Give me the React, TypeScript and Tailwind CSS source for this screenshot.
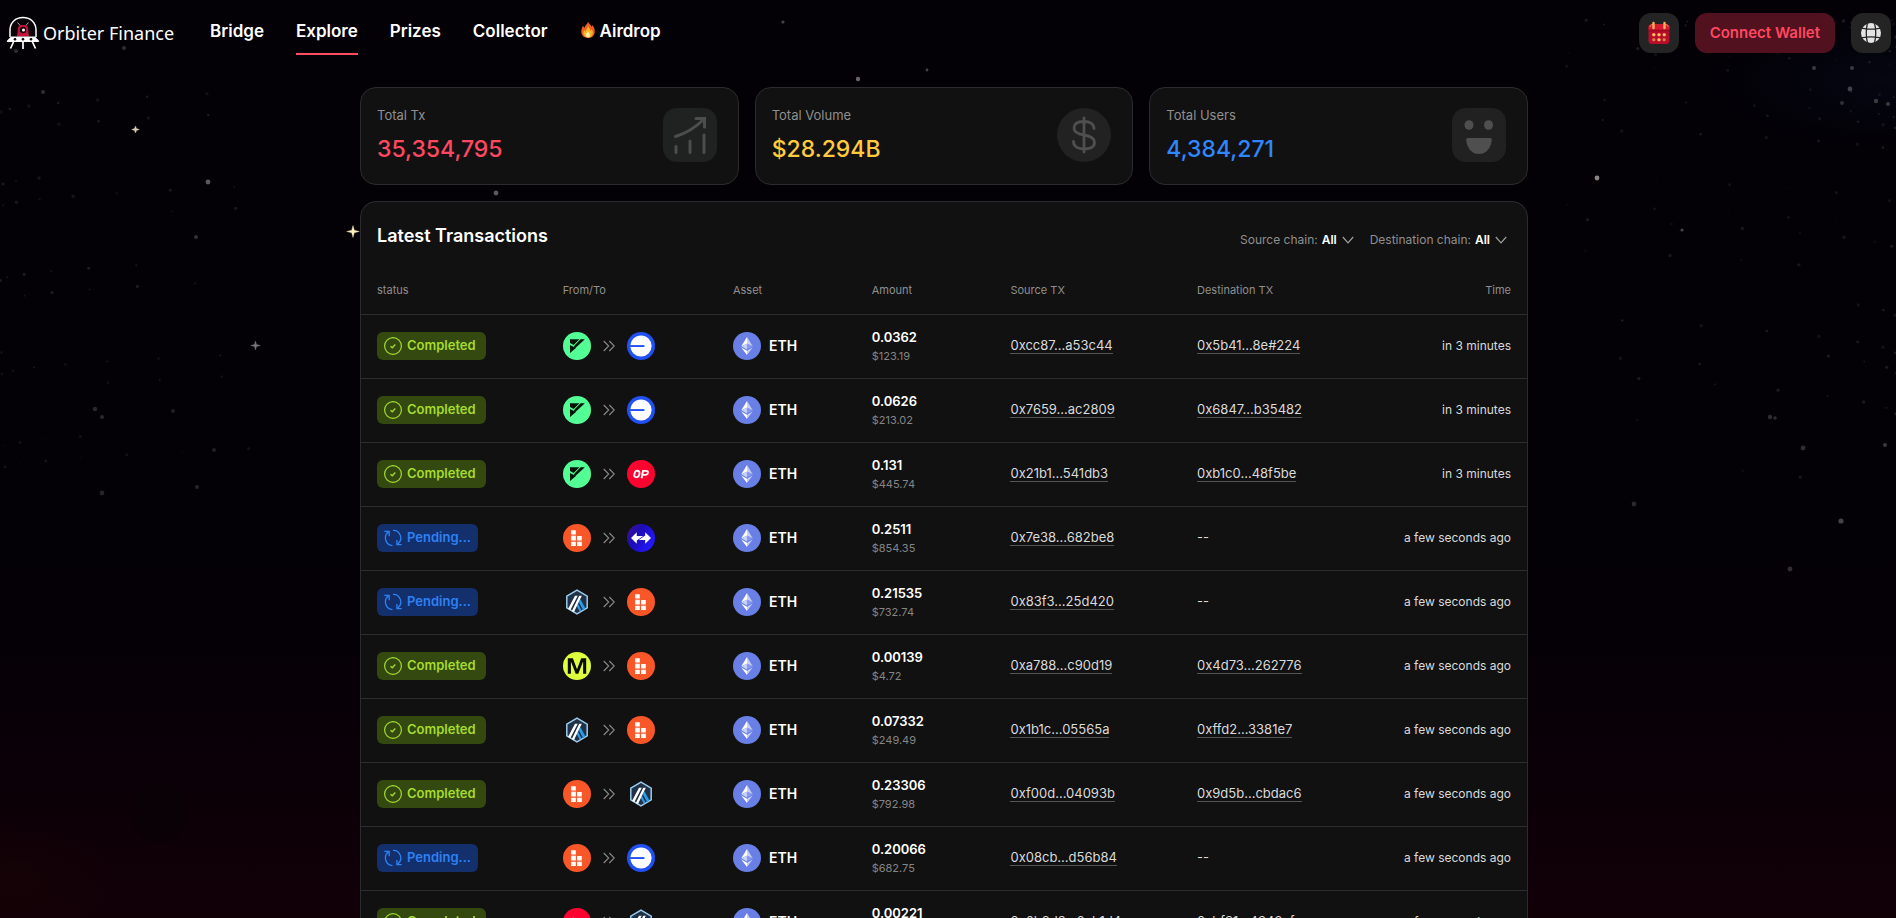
import type { ReactNode } from "react";

type Chain = "zk" | "base" | "op" | "block" | "sync" | "arb" | "mode";

interface Tx {
  done: boolean;
  from: Chain;
  to: Chain;
  amount: string;
  usd: string;
  source: string;
  dest: string;
  time: string;
}

const rows: Tx[] = [
  { done: true, from: "zk", to: "base", amount: "0.0362", usd: "$123.19", source: "0xcc87...a53c44", dest: "0x5b41...8e#224", time: "in 3 minutes" },
  { done: true, from: "zk", to: "base", amount: "0.0626", usd: "$213.02", source: "0x7659...ac2809", dest: "0x6847...b35482", time: "in 3 minutes" },
  { done: true, from: "zk", to: "op", amount: "0.131", usd: "$445.74", source: "0x21b1...541db3", dest: "0xb1c0...48f5be", time: "in 3 minutes" },
  { done: false, from: "block", to: "sync", amount: "0.2511", usd: "$854.35", source: "0x7e38...682be8", dest: "", time: "a few seconds ago" },
  { done: false, from: "arb", to: "block", amount: "0.21535", usd: "$732.74", source: "0x83f3...25d420", dest: "", time: "a few seconds ago" },
  { done: true, from: "mode", to: "block", amount: "0.00139", usd: "$4.72", source: "0xa788...c90d19", dest: "0x4d73...262776", time: "a few seconds ago" },
  { done: true, from: "arb", to: "block", amount: "0.07332", usd: "$249.49", source: "0x1b1c...05565a", dest: "0xffd2...3381e7", time: "a few seconds ago" },
  { done: true, from: "block", to: "arb", amount: "0.23306", usd: "$792.98", source: "0xf00d...04093b", dest: "0x9d5b...cbdac6", time: "a few seconds ago" },
  { done: false, from: "block", to: "base", amount: "0.20066", usd: "$682.75", source: "0x08cb...d56b84", dest: "", time: "a few seconds ago" },
  { done: true, from: "op", to: "arb", amount: "0.00221", usd: "$7.51", source: "0x6b8d3...6eb1d4", dest: "0xbf31...4342cf", time: "a few seconds ago" },
];

const glyphs: Record<Chain, ReactNode> = {
  zk: (
    <>
      <circle cx="14" cy="14" r="14" fill="#54ff95" />
      <path d="M7 7.200h9.400L10.600 13 7 11z M17.600 7.200h4.300L12.400 16l-1.600-1.700z M7 12.900l6 3.100-6 5z" fill="#07120b" />
    </>
  ),
  base: (
    <>
      <circle cx="14" cy="14" r="14" fill="#2151f5" />
      <circle cx="14" cy="14" r="10.600" fill="#fff" />
      <path d="M3 13.100h14.400v1.900H3z" fill="#2151f5" />
    </>
  ),
  op: (
    <>
      <circle cx="14" cy="14" r="14" fill="#ff0330" />
      <g fill="none" stroke="#fff" strokeWidth="1.900">
        <path d="M9.100 10.900c2.200-.5 3.600.3 3.400 2.300-.2 2.600-1.300 4-3.200 4-1.600 0-2.300-1-2-2.700.3-2 .8-3.200 1.800-3.600z" />
        <path d="M14.600 18.200l1.400-7.300h2.900c1.600 0 2.300.7 2 2-.3 1.400-1.200 2-2.700 2h-2.600" />
      </g>
    </>
  ),
  block: (
    <>
      <circle cx="14" cy="14" r="14" fill="#fa5728" />
      <path d="M8.200 6.200h4.600v4.400H8.200zM8.200 12h4.600v4.400H8.200zM14 12h4.800v4.400H14zM8.200 17.700h4.600v4.400H8.200zM14 17.700h4.800v4.400H14z" fill="#fff" />
      <path d="M8.200 10.800h4.600v.9H8.200z" fill="#fff" opacity=".4" />
    </>
  ),
  sync: (
    <>
      <defs>
        <linearGradient id="sync-fill" x1="0" y1="0" x2="1" y2="0.6">
          <stop offset="0" stopColor="#43108f" />
          <stop offset="0.45" stopColor="#1c0cb4" />
          <stop offset="1" stopColor="#2218ff" />
        </linearGradient>
      </defs>
      <circle cx="14" cy="14" r="14" fill="url(#sync-fill)" />
      <path d="M4 14l5.800-5.800v3.900h6.400L9.800 16.600v3.200zM24 14l-5.800 5.800v-3.900h-6.400l6.400-4.500V8.200z" fill="#fff" />
    </>
  ),
  arb: (
    <>
      <path d="M14 2.200l10.200 5.900v11.800L14 25.800 3.800 19.900V8.100z" fill="#213147" stroke="#9dcced" strokeWidth="1.500" />
      <path d="M17.400 11.200l5 9.200-2.300 1.500-4.200-7.600z" fill="#28a0f0" />
      <path d="M15.100 16l3.300 6.400-1.700 1-3-5.600z" fill="#28a0f0" />
      <path d="M12 7.800h2.700L7.300 22.300l-2.200-1.500zM16.200 7.800h2.600L10.900 24.200l-2-1.300z" fill="#fff" />
    </>
  ),
  mode: (
    <>
      <circle cx="14" cy="14" r="14" fill="#dffe3e" />
      <path d="M4.800 21.800V6.200h5.100L14 17.200l4.200-11h5v15.600h-3.100V9.400l-4.800 12.400h-2.600L7.900 9.400v12.400z" fill="#0b0b06" />
    </>
  ),
};

function ChainIcon({ chain }: { chain: Chain }) {
  return (
    <svg viewBox="0 0 28 28" className="size-7 shrink-0" aria-hidden="true">
      {glyphs[chain]}
    </svg>
  );
}

function EthIcon() {
  return (
    <svg viewBox="0 0 28 28" className="size-7 shrink-0" aria-hidden="true">
      <circle cx="14" cy="14" r="14" fill="#6a7fe6" />
      <path d="M14 5v6.700l-5.700 2.600z" fill="#fff" />
      <path d="M14 5l5.700 9.300-5.700-2.600z" fill="#c6cff7" />
      <path d="M14 11.700v5.900l-5.700-3.300z" fill="#c6cff7" />
      <path d="M14 11.700l5.700 2.600-5.700 3.300z" fill="#8998eb" />
      <path d="M8.300 15.500L14 18.800V23z" fill="#fff" />
      <path d="M19.700 15.500L14 18.800V23z" fill="#c6cff7" />
    </svg>
  );
}

function Status({ done }: { done: boolean }) {
  return done ? (
    <span className="inline-flex h-7 items-center gap-[5px] rounded-md bg-[#33490f] pr-[10px] pl-[7px] text-[13px] font-semibold text-[#a4dc2c]">
      <svg viewBox="0 0 18 18" className="size-[18px]" fill="none" stroke="currentColor" aria-hidden="true">
        <circle cx="9" cy="9" r="8.400" strokeWidth="1.200" />
        <path d="M6.500 9.300l1.800 1.500 3-3.200" strokeWidth="1.400" />
      </svg>
      Completed
    </span>
  ) : (
    <span className="inline-flex h-7 items-center gap-[5px] rounded-md bg-[#13306c] pr-[7px] pl-[7px] text-[13px] font-semibold text-[#2f80f5]">
      <svg viewBox="0 0 18 18" className="size-[18px]" fill="none" stroke="currentColor" strokeWidth="1.300" aria-hidden="true">
        <path d="M4.700 2.800A7.600 7.600 0 0 0 8.500 16.600M9 1.300A7.600 7.600 0 0 1 13.400 15.200" />
        <path d="M.3 2.300H5.200V7.200M17.700 15.700H12.900V10.900" />
      </svg>
      Pending...
    </span>
  );
}

function Arrows() {
  return (
    <svg viewBox="0 0 12 12" className="size-3" fill="none" stroke="#8a8a8a" strokeWidth="1.100" aria-hidden="true">
      <path d="M.7 1l5 5-5 5M6.300 1l5 5-5 5" />
    </svg>
  );
}

function Filter({ id, label }: { id: string; label: string }) {
  return (
    <div className="flex items-center gap-1 text-xs leading-5">
      <label htmlFor={id} className="text-[#8f8f8f]">{label}</label>
      <div className="relative flex items-center">
        <select id={id} className="w-8 appearance-none bg-transparent font-semibold text-white outline-none">
          <option>All</option>
        </select>
        <svg viewBox="0 0 12 8" className="pointer-events-none absolute right-0 h-2 w-3" fill="none" stroke="#a0a0a0" strokeWidth="1.200" aria-hidden="true">
          <path d="M.8 1L6 6.800 11.200 1" />
        </svg>
      </div>
    </div>
  );
}

function StatCard({ label, value, tone, children }: { label: string; value: string; tone: string; children: ReactNode }) {
  return (
    <section className="flex flex-1 items-center justify-between rounded-2xl border border-[#2c2c2e] bg-[#111] pt-[17px] pr-[21px] pb-[19px] pl-4">
      <div>
        <h3 className="text-[13px] leading-5 text-[#8f8f8f]">{label}</h3>
        <p className={`mt-2 text-[23px] leading-8 font-medium ${tone}`}>{value}</p>
      </div>
      <svg viewBox="0 0 54 54" className="size-[54px]" aria-hidden="true">{children}</svg>
    </section>
  );
}

const brightStars = [
  [783, 22, 1.6, 0.3], [858, 79, 2.2, 0.45], [927, 70, 1.4, 0.3], [496, 193, 2.4, 0.4], [208, 182, 2.4, 0.4],
  [196, 237, 2, 0.22], [124, 48, 2, 0.2], [16, 51, 2, 0.2], [43, 92, 2, 0.2], [1597, 178, 2.4, 0.6],
  [1682, 230, 1.6, 0.3], [1841, 521, 2.6, 0.3], [1790, 569, 2.4, 0.2], [1634, 504, 2.4, 0.18], [1803, 448, 2.4, 0.2],
  [1770, 417, 2.2, 0.2], [1775, 418, 1.8, 0.2], [1885, 445, 2, 0.25], [1850, 89, 2.4, 0.28], [1852, 68, 2, 0.25],
  [1876, 101, 2.2, 0.25], [1888, 104, 2, 0.25], [1842, 103, 2, 0.2], [1814, 68, 2, 0.25], [102, 493, 2.4, 0.16],
  [197, 487, 2, 0.16], [214, 450, 2, 0.14], [95, 409, 2.2, 0.18], [102, 417, 2, 0.18], [173, 411, 2, 0.14],
];

function Sky() {
  const dust = Array.from({ length: 170 }, (_, i) => {
    const left = i % 3 === 0;
    const a = ((i * 7919) % 997) / 997;
    const b = ((i * 5417) % 991) / 991;
    const x = left ? a * a * 250 : 1896 - a * a * 330;
    const y = left ? 40 + b * 430 : 20 + b * b * 460;
    return { x, y, r: 0.9 + ((i * 31) % 10) / 10, o: 0.06 + ((i * 17) % 10) / 110 };
  });
  return (
    <svg className="pointer-events-none absolute inset-0 h-full w-full" viewBox="0 0 1896 918" preserveAspectRatio="xMidYMin slice" aria-hidden="true">
      <defs>
        <radialGradient id="haze">
          <stop offset="0" stopColor="#061020" stopOpacity="0.4" />
          <stop offset="1" stopColor="#061020" stopOpacity="0" />
        </radialGradient>
        <radialGradient id="ember">
          <stop offset="0" stopColor="#1a0505" stopOpacity="0.5" />
          <stop offset="1" stopColor="#1a0505" stopOpacity="0" />
        </radialGradient>
      </defs>
      <ellipse cx="1880" cy="80" rx="180" ry="70" fill="url(#haze)" />
      <ellipse cx="0" cy="880" rx="120" ry="60" fill="url(#ember)" />
      <ellipse cx="159" cy="813" rx="29" ry="29" fill="#050105" opacity="0.5" />
      {dust.map((s, i) => (
        <circle key={i} cx={s.x} cy={s.y} r={s.r} fill="#b8c0cc" opacity={s.o} />
      ))}
      {brightStars.map(([x, y, r, o], i) => (
        <circle key={i} cx={x} cy={y} r={r} fill="#e6dcd8" opacity={o} />
      ))}
      <path d="M353 225.500l1.300 4.700 5 1.300-5 1.300-1.300 4.700-1.300-4.700-5-1.300 5-1.300z" fill="#fff0c0" stroke="#fff0c0" strokeOpacity=".35" />
      <path d="M135.500 126l1 2.500 2.800 1-2.800 1-1 2.500-1-2.500-2.800-1 2.800-1z" fill="#d8cbb8" stroke="#d8cbb8" strokeOpacity=".4" />
      <path d="M255.500 341l1 3.500 3.800 1-3.800 1-1 3.500-1-3.500-3.800-1 3.800-1z" fill="#77777c" stroke="#77777c" strokeOpacity=".4" />
    </svg>
  );
}

function Logo() {
  return (
    <svg viewBox="0 0 34 34" className="size-[34px] shrink-0" aria-hidden="true">
      <path d="M4 21V14C4 6.500 9.500 1.500 17 1.500S30 6.500 30 14V21" fill="#090509" stroke="#fff" strokeWidth="1.500" />
      <path d="M11.500 6.500l2.700 3M22.500 6.500l-2.700 3" stroke="#b9a2a6" strokeWidth="1" />
      <path d="M11 20.500l1-8.500c.4-2 1.200-3 2.600-3h4.800c1.400 0 2.200 1 2.600 3l1 8.500z" fill="#c4143c" />
      <circle cx="17" cy="14" r="3.200" fill="#12060a" />
      <circle cx="17.500" cy="14" r="1.500" fill="#fff" />
      <path d="M5 20.500h24l4 4.300c.4.600.1 1.200-.6 1.200H1.600c-.7 0-1-.6-.6-1.200z" fill="#fff" />
      <path d="M7.500 26l-3 6.500M26.500 26l3 6.500M17 26v7" stroke="#fff" strokeWidth="1.700" />
      <circle cx="9" cy="23.300" r="1.300" fill="#12060a" />
      <circle cx="17" cy="23.300" r="1.300" fill="#12060a" />
      <circle cx="25" cy="23.300" r="1.300" fill="#12060a" />
    </svg>
  );
}

function Flame() {
  return (
    <svg viewBox="0 0 16 18" className="mb-1 h-[18px] w-4" aria-hidden="true">
      <path d="M8 .8c1 2 3 3.200 3.500 5.200.4-.6.7-1.300.7-2 1.800 2 2.800 4.400 2.500 7.200-.4 3.500-3 5.800-6.700 5.800S1.600 14.700 1.300 11.300C1.100 8.600 2.300 6.400 3 4.600c.4.800.6 1.600 1.400 2.300C5 4.200 7.500 3.500 8 .8z" fill="#f2601e" />
      <path d="M8.200 5c.5 1.900 2 3 2.300 4.800.6-.4.9-.9 1-1.500 1.300 1.600 1.600 3.400 1 5.200-.7 2-2.300 3-4.500 3s-4-1.200-4.500-3.200c-.4-1.700 0-3.100.8-4.300.2.800.6 1.300 1.300 1.600C5.800 8.600 7.800 7.200 8.200 5z" fill="#ffb42c" />
      <path d="M8 10c.4 1.300 1.900 2 1.900 3.900 0 1.400-.8 2.300-1.900 2.300s-2.100-.9-2.100-2.300c0-1.700 1.700-2.300 2.100-3.900z" fill="#fff1a0" />
    </svg>
  );
}

function Calendar() {
  return (
    <svg viewBox="0 0 22 24" className="h-6 w-[22px]" aria-hidden="true">
      <rect x="0.500" y="3" width="21" height="20" rx="3.500" fill="#b80d28" />
      <path d="M.5 8.500V6.500A3.500 3.500 0 0 1 4 3h14a3.500 3.500 0 0 1 3.500 3.500v2z" fill="#d31a30" />
      <path d="M.5 9.300h21v1H.5z" fill="#8d0820" />
      <path d="M2 6c.5-2 2-2.500 3-2.500M17 3.500c2 0 3 1 3.300 2.500" stroke="#f2884c" strokeWidth="1" fill="none" />
      <path d="M5.500 2v5M16.500 2v5" stroke="#ffb05c" strokeWidth="2.400" strokeLinecap="round" />
      <g fill="#ffbe6a">
        <rect x="4.300" y="12.300" width="3" height="3" rx="1" />
        <rect x="9.500" y="12.300" width="3" height="3" rx="1" />
        <rect x="14.700" y="12.300" width="3" height="3" rx="1" />
        <rect x="4.300" y="17.300" width="3" height="3" rx="1" opacity=".6" />
        <rect x="9.500" y="17.300" width="3" height="3" rx="1" />
        <rect x="14.700" y="17.300" width="3" height="3" rx="1" opacity=".6" />
      </g>
    </svg>
  );
}

function Globe() {
  return (
    <svg viewBox="0 0 20 20" className="size-5" aria-hidden="true">
      <circle cx="10" cy="10" r="10" fill="#e4e4e4" />
      <g fill="none" stroke="#242424" strokeWidth="1.300">
        <path d="M6.500 0C5 6 5 14 6.500 20M13.500 0C15 6 15 14 13.500 20M0 5.200c6 1.100 14 1.100 20 0M0 14.800c6-1.100 14-1.100 20 0" />
      </g>
    </svg>
  );
}

const navLinks = ["Bridge", "Explore", "Prizes", "Collector"];

export default function App() {
  return (
    <div className="relative flex h-screen flex-col overflow-hidden bg-linear-to-b from-[#030006] from-60% to-[#120007] font-[Inter,sans-serif] text-white">
      <Sky />
      <header className="relative flex items-start justify-between py-[13px] pr-[5px] pl-[6px]">
        <div className="flex items-start gap-9">
          <a href="#home" className="flex h-10 items-center gap-[3px] font-['Noto_Sans',sans-serif] text-lg leading-6">
            <Logo />
            Orbiter Finance
          </a>
          <nav className="flex gap-8 text-[17px] font-semibold">
            {navLinks.map((name) => (
              <a key={name} href={`#${name.toLowerCase()}`} className={`flex h-[42px] items-center border-b-2 pb-[2px] ${name === "Explore" ? "border-[#ff4d61]" : "border-transparent"}`}>
                {name}
              </a>
            ))}
            <a href="#airdrop" className="flex h-[42px] items-center gap-1 border-b-2 border-transparent pb-[2px]">
              <Flame />
              Airdrop
            </a>
          </nav>
        </div>
        <div className="flex items-center gap-4">
          <button aria-label="Calendar" className="flex size-10 items-center justify-center rounded-xl bg-[#242424]"><Calendar /></button>
          <button className="h-10 rounded-xl bg-[#51111f] px-[15px] text-[15px] font-semibold text-[#ff4860]">Connect Wallet</button>
          <button aria-label="Language" className="flex size-10 items-center justify-center rounded-xl bg-[#242424]"><Globe /></button>
        </div>
      </header>

      <main className="relative min-h-0 flex-1 overflow-y-auto pt-[19px] pr-2 [scrollbar-width:none]">
        <div className="mx-auto flex max-w-[1168px] flex-col gap-4">
          <div className="flex gap-4">
            <StatCard label="Total Tx" value="35,354,795" tone="text-[#ff4860]">
              <rect width="54" height="54" rx="14" fill="#202121" />
              <path d="M12.500 28.500C24 25 32 20 40.500 11.500M33 10.500h8.500v8.500M13 38.500v6M27 33v11.500M41 27v17.500" fill="none" stroke="#4d4d4d" strokeWidth="3" strokeLinecap="round" />
            </StatCard>
            <StatCard label="Total Volume" value="$28.294B" tone="text-[#ffcb3d]">
              <circle cx="27" cy="27" r="27" fill="#212221" />
              <path d="M37 20.500c0-4.500-4-7-10-7s-10 2-10 6.500 4 6 10 7 10.500 2.500 10.500 7.300-4.500 6.700-10.500 6.700-10.500-2.500-10.500-7.500M27 10v34" fill="none" stroke="#4f4f4f" strokeWidth="2.800" strokeLinecap="round" />
            </StatCard>
            <StatCard label="Total Users" value="4,384,271" tone="text-[#2f86ff]">
              <rect width="54" height="54" rx="14" fill="#212121" />
              <ellipse cx="17" cy="17" rx="4.500" ry="4.800" fill="#4f4f4f" />
              <ellipse cx="36.500" cy="17" rx="4.500" ry="4.800" fill="#4f4f4f" />
              <path d="M16 30h22c1.300 0 2 .9 1.800 2.200C38.800 41 33.500 46 27 46s-11.800-5-12.800-13.800C14 30.900 14.700 30 16 30z" fill="#4f4f4f" />
            </StatCard>
          </div>

          <section className="rounded-t-2xl border border-[#2c2c2e] bg-[#111]">
            <div className="flex items-start justify-between px-4 pt-5 pb-3">
              <h2 className="text-lg leading-7 font-semibold">Latest Transactions</h2>
              <div className="flex gap-4 pt-2 pr-1">
                <Filter id="source-chain" label="Source chain:" />
                <Filter id="destination-chain" label="Destination chain:" />
              </div>
            </div>
            <table className="w-full table-fixed text-left">
              <thead className="text-[11px] text-[#8f8f8f]">
                <tr className="h-[52px] border-b border-[#2c2c2e]">
                  <th className="w-[17.300%] pt-1 pl-4 font-normal">status</th>
                  <th className="w-[14.600%] pt-1 font-normal">From/To</th>
                  <th className="w-[11.900%] pt-1 font-normal">Asset</th>
                  <th className="w-[11.900%] pt-1 font-normal">Amount</th>
                  <th className="w-[16%] pt-1 font-normal">Source TX</th>
                  <th className="pt-1 font-normal">Destination TX</th>
                  <th className="pt-1 pr-4 text-right font-normal">Time</th>
                </tr>
              </thead>
              <tbody className="text-[13px] text-[#dadada]">
                {rows.map((tx) => (
                  <tr key={tx.source} className="h-16 border-b border-[#2c2c2e]">
                    <td className="pl-4"><div className="flex"><Status done={tx.done} /></div></td>
                    <td>
                      <div className="flex items-center gap-3">
                        <ChainIcon chain={tx.from} />
                        <Arrows />
                        <ChainIcon chain={tx.to} />
                      </div>
                    </td>
                    <td>
                      <div className="flex items-center gap-2 text-sm font-semibold text-white"><EthIcon />ETH</div>
                    </td>
                    <td>
                      <div className="text-[13px] leading-5 font-semibold text-white">{tx.amount}</div>
                      <div className="text-[11px] leading-[18px] text-[#858585]">{tx.usd}</div>
                    </td>
                    <td><a href={`#${tx.source}`} className="border-b border-[#555]">{tx.source}</a></td>
                    <td>{tx.dest ? <a href={`#${tx.dest}`} className="border-b border-[#555]">{tx.dest}</a> : "--"}</td>
                    <td className="pr-4 text-right text-xs">{tx.time}</td>
                  </tr>
                ))}
              </tbody>
            </table>
          </section>
        </div>
      </main>
    </div>
  );
}
